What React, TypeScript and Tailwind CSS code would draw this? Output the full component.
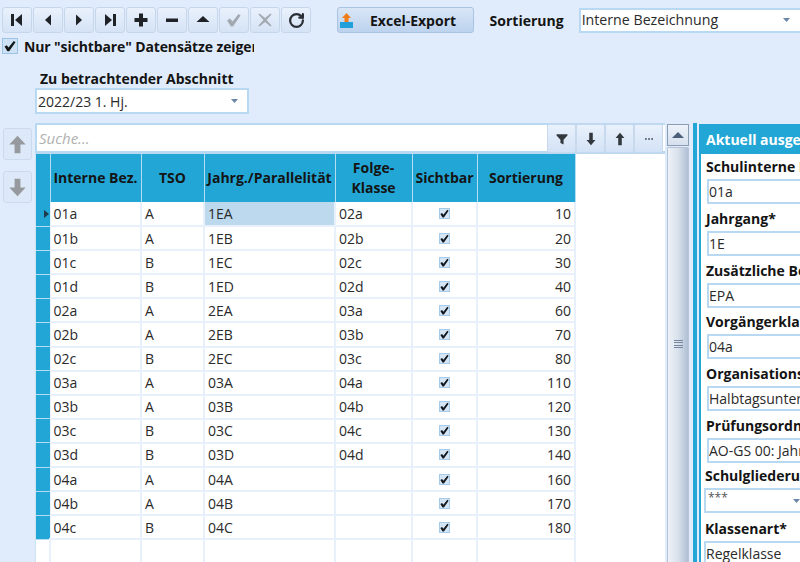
import React from "react";
import { RotateCw } from "lucide-react";

const rows = [
  ["01a", "A", "1EA", "02a", "10"],
  ["01b", "A", "1EB", "02b", "20"],
  ["01c", "B", "1EC", "02c", "30"],
  ["01d", "B", "1ED", "02d", "40"],
  ["02a", "A", "2EA", "03a", "60"],
  ["02b", "A", "2EB", "03b", "70"],
  ["02c", "B", "2EC", "03c", "80"],
  ["03a", "A", "03A", "04a", "110"],
  ["03b", "A", "03B", "04b", "120"],
  ["03c", "B", "03C", "04c", "130"],
  ["03d", "B", "03D", "04d", "140"],
  ["04a", "A", "04A", "", "160"],
  ["04b", "A", "04B", "", "170"],
  ["04c", "B", "04C", "", "180"],
];

const Glyph = ({ d, color = "#1f2328", size = 18 }: { d: string; color?: string; size?: number }) => (
  <svg width={size} height={size} viewBox="0 0 18 18" fill={color}>
    <path d={d} />
  </svg>
);

const navIcons = [
  { d: "M3 3h3v12H3zM14 3v12L7 9z" },
  { d: "M12 3.500v11L6 9z" },
  { d: "M6 3.500v11L12 9z" },
  { d: "M4 3v12l7-6zM12 3h3v12h-3z" },
  { d: "M7 2.500h4V7h4.500v4H11v4.500H7V11H2.500V7H7z" },
  { d: "M3 7.500h12v3.500H3z" },
  { d: "M9 5l6.500 6h-13z" },
  { d: "M2 9.500l3-2 2.500 3L13.500 3l2 1.500L8 15.500H6z", color: "#a3a9b0" },
  { d: "M3.500 2.500L9 7l5.500-4.500 1 1L10.500 9l5 5.500-1 1L9 11l-5.500 4.500-1-1L7.500 9l-5-5.500z", color: "#a3a9b0" },
];

const NavButton = ({ children }: { children: React.ReactNode }) => (
  <div className="w-[30px] h-[26px] flex items-center justify-center rounded-[3px] border border-[#c6d7ec] bg-gradient-to-b from-[#e9f1fc] to-[#d5e3f6]">
    {children}
  </div>
);

const Caret = () => (
  <svg width="7" height="4" viewBox="0 0 7 4" fill="#6a86a8" className="shrink-0">
    <path d="M0 0h7L3.500 4z" />
  </svg>
);

const Check = ({ size = 12 }: { size?: number }) => (
  <svg width={size} height={size} viewBox="0 0 12 12" fill="#14171c">
    <path d="M.5 6.500l2.300-1.300 1.700 2.300L9.800 1l1.700 1.200L5.200 11.200H3.400z" />
  </svg>
);

const SearchButton = ({ d, size = 16 }: { d: string; size?: number }) => (
  <div className="w-[29px] h-[29px] flex items-center justify-center rounded-[2px] border border-[#c9d9ed] bg-gradient-to-b from-[#e9f1fc] to-[#d3e2f6]">
    <Glyph d={d} size={size} color="#33383e" />
  </div>
);

const Field = ({
  label,
  value,
  className = "",
  inputClass = "ml-[1px]",
  combo = false,
}: {
  label: string;
  value: string;
  className?: string;
  inputClass?: string;
  combo?: boolean;
}) => (
  <div className={`flex flex-col ${className}`}>
    <div className="h-[20px] leading-[20px] font-bold text-[14px] text-[#141414] whitespace-nowrap">{label}</div>
    <div className={`mt-[2px] w-[200px] h-[25px] shrink-0 border-2 border-[#b9d8f1] bg-white flex items-center text-[14px] text-[#2a2a2a] whitespace-nowrap ${inputClass}`}>
      <span className={combo ? "w-[87px] pl-[2px] -mt-[5px] text-[12px] text-[#555]" : ""}>{value}</span>
      {combo && <Caret />}
    </div>
  </div>
);

export default function App() {
  const headCell = "border-r border-[#b5dcf0] bg-[#22a6d6] font-bold text-[14px] text-[#141414] text-center leading-[20px] p-0";
  const cell = "border-r-2 border-b-2 border-[#e8f0fb] text-[14px] text-[#2a2a2a] px-[3px] p-0 whitespace-nowrap";

  return (
    <div className="w-[800px] h-[562px] overflow-hidden bg-[#e0ecfb] flex flex-col pt-[7px] font-['Open_Sans','Noto_Sans',sans-serif]">
      {/* Toolbar */}
      <div className="flex items-center h-[26px] pl-[2px] shrink-0">
        <div className="flex gap-[1px]">
          {navIcons.map((icon, i) => (
            <NavButton key={i}>
              <Glyph d={icon.d} color={icon.color} />
            </NavButton>
          ))}
          <NavButton>
            <RotateCw size={17} strokeWidth={3.2} color="#2b3036" />
          </NavButton>
        </div>
        <div className="ml-[26px] w-[137px] h-[26px] flex items-center rounded-[3px] border border-[#a9c3e2] bg-gradient-to-b from-[#d9e6f7] to-[#bcd2ee] pl-[2px]">
          <svg width="13" height="15" viewBox="0 0 13 15" className="shrink-0">
            <path d="M6.500 0L11 5H8.500v4h-4V5H2z" fill="#f07d1a" />
            <path d="M0 9h13v6H0z" fill="#22a0dc" />
          </svg>
          <span className="ml-[17px] font-bold text-[14px] text-[#141414]">Excel-Export</span>
        </div>
        <span className="ml-[16px] font-bold text-[14px] text-[#141414] whitespace-nowrap">Sortierung</span>
        <div className="ml-[15px] w-[222px] h-[25px] border-2 border-[#b9d8f1] border-r-0 bg-white flex items-center justify-between pl-[1px] pr-[10px] text-[14.2px] text-[#2a2a2a] whitespace-nowrap">
          <span>Interne Bezeichnung</span>
          <Caret />
        </div>
      </div>

      {/* Filter */}
      <div className="flex items-center h-[16px] mt-[5px] shrink-0 pl-[2px]">
        <div className="w-[16px] h-[16px] flex items-center justify-center border border-[#9cc4e4] bg-[#cfe2f5]">
          <Check />
        </div>
        <div className="ml-[6px] w-[230px] overflow-hidden font-bold text-[14px] tracking-[-0.12px] text-[#141414] whitespace-nowrap">
          Nur "sichtbare" Datensätze zeigen
        </div>
      </div>
      <div className="ml-[40px] mt-[17px] h-[16px] leading-[16px] font-bold text-[14px] text-[#141414] shrink-0">Zu betrachtender Abschnitt</div>
      <div className="ml-[35px] mt-[1px] w-[214px] h-[26px] shrink-0 border-2 border-[#b9d8f1] bg-white flex items-center justify-between pl-[1px] pr-[9px] text-[14px] text-[#2a2a2a]">
        <span>2022/23 1. Hj.</span>
        <Caret />
      </div>

      {/* Main area */}
      <div className="mt-[9px] flex flex-1 min-h-0">
        <div className="w-[35px] shrink-0 pl-[3px] pt-[5px] flex flex-col gap-[11px]">
          <div className="w-[29px] h-[32px] flex items-center justify-center rounded-[3px] border border-[#cbdaec] bg-[#dde9f8]">
            <Glyph d="M9 1.500L16 9h-4.500v7.500h-5V9H2z" color="#96999d" size={21} />
          </div>
          <div className="w-[29px] h-[32px] flex items-center justify-center rounded-[3px] border border-[#cbdaec] bg-[#dde9f8]">
            <Glyph d="M9 16.500L16 9h-4.500V1.500h-5V9H2z" color="#96999d" size={21} />
          </div>
        </div>

        <div className="w-[630px] shrink-0 flex flex-col min-h-0">
          <div className="h-[31px] shrink-0 flex items-center border-2 border-b-[3px] border-[#b9d8f1] border-r-0 bg-white">
            <span className="flex-1 pl-[2px] text-[15px] italic text-[#b0b0b0]">Suche...</span>
            <div className="flex self-start -mt-[1px] mr-[2px]">
              <SearchButton d="M2 3h14v1.500L11 10v6l-4-2v-4L2 4.500z" size={14} />
              <SearchButton d="M7 2h4v8h3l-5 6-5-6h3z" />
              <SearchButton d="M9 2l5 6h-3v8H7V8H4z" />
              <SearchButton d="M4 8h2v2H4zM8 8h2v2H8zM12 8h2v2h-2z" size={14} />
            </div>
          </div>
          <div className="flex-1 min-h-0 bg-white border-l border-[#cfe2f5] overflow-hidden">
            <table className="table-fixed border-collapse w-[539px] h-[408px]">
              <colgroup>
                <col className="w-[14px]" />
                <col className="w-[91px]" />
                <col className="w-[63px]" />
                <col className="w-[131px]" />
                <col className="w-[77px]" />
                <col className="w-[65px]" />
                <col className="w-[98px]" />
              </colgroup>
              <thead>
                <tr className="h-[48px]">
                  <th className={headCell}></th>
                  <th className={headCell}>Interne Bez.</th>
                  <th className={headCell}>TSO</th>
                  <th className={`${headCell} whitespace-nowrap`}>Jahrg./Parallelität</th>
                  <th className={headCell}>Folge-<br />Klasse</th>
                  <th className={headCell}>Sichtbar</th>
                  <th className={headCell}>Sortierung</th>
                </tr>
              </thead>
              <tbody>
                {rows.map((row, i) => (
                  <tr key={row[0]} className="h-[24.1px]">
                    <td className="bg-[#22a6d6] border-b border-[#b5dcf0] border-r border-r-[#e8f0fb] p-0">
                      {i === 0 && (
                        <svg width="5" height="8" viewBox="0 0 5 8" fill="#1f3a4d" className="ml-[8px]">
                          <path d="M0 0l5 4-5 4z" />
                        </svg>
                      )}
                    </td>
                    <td className={cell}>{row[0]}</td>
                    <td className={cell}>{row[1]}</td>
                    <td className={`${cell} ${i === 0 ? "bg-[#bcd9ee]" : ""}`}>{row[2]}</td>
                    <td className={cell}>{row[3]}</td>
                    <td className={cell}>
                      <div className="mx-auto w-[11px] h-[11px] flex items-center justify-center border border-[#a6cbe8] bg-[#d4e6f6]">
                        <Check size={9} />
                      </div>
                    </td>
                    <td className={`${cell} text-right`}>{row[4]}</td>
                  </tr>
                ))}
                <tr>
                  <td className="border-r-2 border-[#e8f0fb]"></td>
                  <td className="border-r-2 border-[#e8f0fb]"></td>
                  <td className="border-r-2 border-[#e8f0fb]"></td>
                  <td className="border-r-2 border-[#e8f0fb]"></td>
                  <td className="border-r-2 border-[#e8f0fb]"></td>
                  <td className="border-r-2 border-[#e8f0fb]"></td>
                  <td className="border-r-2 border-[#e8f0fb]"></td>
                </tr>
              </tbody>
            </table>
          </div>
        </div>

        {/* Scrollbar */}
        <div className="ml-[2px] mt-[1px] w-[22px] shrink-0 flex flex-col">
          <div className="h-[22px] flex items-center justify-center border border-[#8a9db5] bg-gradient-to-b from-[#eef3fa] to-[#d6e0ee]">
            <svg width="12" height="6" viewBox="0 0 12 6" fill="#4c5f78">
              <path d="M6 0l6 6H0z" />
            </svg>
          </div>
          <div className="mt-[1px] flex-1 flex items-center justify-center border border-[#b6c4d8] border-b-0 rounded-t-[2px] bg-gradient-to-r from-[#eef2f8] via-[#d9e1ec] to-[#b0bfd4] pb-[22px]">
            <div className="w-[9px] h-[9px] flex flex-col justify-between">
              <div className="h-[1px] bg-[#7688a0]" />
              <div className="h-[1px] bg-[#7688a0]" />
              <div className="h-[1px] bg-[#7688a0]" />
              <div className="h-[1px] bg-[#7688a0]" />
            </div>
          </div>
        </div>

        {/* Detail panel */}
        <div className="ml-[4px] w-[4px] shrink-0 bg-[#22a6d6]" />
        <div className="ml-[2px] mt-[1px] flex-1 min-w-0 bg-white border-l-2 border-[#22a6d6] overflow-hidden">
          <div className="h-[30px] bg-[#22a6d6] flex items-center pl-[5px] font-bold text-[14px] text-white whitespace-nowrap">
            Aktuell ausgewählte Klasse
          </div>
          <div className="pl-[5px] pt-[3px]">
            <Field label="Schulinterne Bezeichnung" value="01a" />
            <Field label="Jahrgang*" value="1E" className="mt-[5px]" />
            <Field label="Zusätzliche Bezeichnung" value="EPA" className="mt-[5px]" />
            <Field label="Vorgängerklasse" value="04a" className="mt-[4px]" />
            <Field label="Organisationsform" value="Halbtagsunterricht" className="mt-[5px]" />
            <Field label="Prüfungsordnung" value="AO-GS 00: Jahrgang" className="mt-[5px]" />
            <Field label="Schulgliederung" value="***" combo inputClass="-ml-[1px]" className="mt-[3px] -ml-[1px]" />
            <Field label="Klassenart*" value="Regelklasse" inputClass="-ml-[1px]" className="mt-[6px] -ml-[1px]" />
          </div>
        </div>
      </div>
    </div>
  );
}
